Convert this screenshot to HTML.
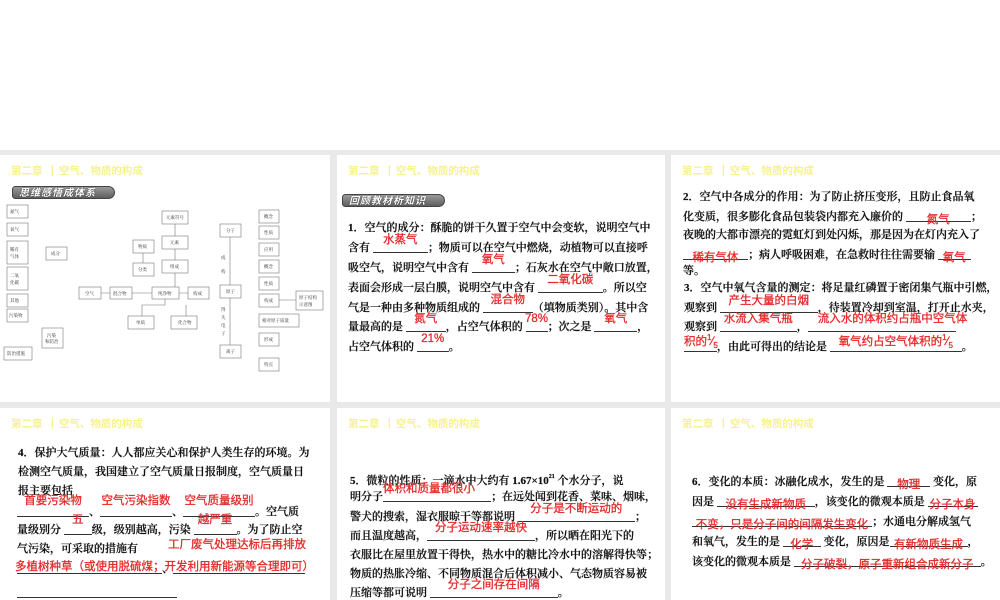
<!DOCTYPE html>
<html><head><meta charset="utf-8">
<style>
*{margin:0;padding:0;box-sizing:border-box}
body{width:1000px;height:600px;background:#fff;position:relative;overflow:hidden;font-family:"Liberation Serif","Noto Serif CJK SC",serif;color:#111}
#bg{position:absolute;left:0;top:150px;width:1000px;height:450px;background:#e9e9e9}
.s{position:absolute;background:#fff;overflow:hidden}
.h{position:absolute;left:11px;top:8px;font-size:10.5px;font-weight:bold;color:#f6f290;font-family:"Liberation Sans","Noto Sans CJK SC",sans-serif;white-space:nowrap}
.l{position:absolute;white-space:nowrap;font-size:11px;line-height:20px;height:20px;font-weight:600;-webkit-text-stroke:0.2px #111}
.b{display:inline-block;border-bottom:1px solid #333;height:13px;vertical-align:-2px;position:relative}
.b i{position:absolute;left:-20px;right:-20px;text-align:center;top:-7px;color:#e42a2a;font-style:normal;font-weight:normal;-webkit-text-stroke:0.3px #e42a2a;font-family:"Liberation Sans","Noto Sans CJK SC",sans-serif;white-space:nowrap;font-size:11.5px;line-height:14px}
.dn .b i{top:4px}
.red{position:absolute;color:#e42a2a;-webkit-text-stroke:0.3px #e42a2a;font-family:"Liberation Sans","Noto Sans CJK SC",sans-serif;white-space:nowrap;font-size:11.5px;line-height:14px}
.ban{position:absolute;height:13px;width:103px;border-radius:4px 8px 8px 4px;background:linear-gradient(#9a9a9a,#5e5e5e);color:#fff;font-size:10px;font-weight:bold;font-style:italic;line-height:13px;padding-left:6px;letter-spacing:1px;font-family:"Liberation Sans","Noto Sans CJK SC",sans-serif;border:1px solid #444;text-shadow:0 0 1px #000}
svg text{font-family:"Liberation Serif","Noto Serif CJK SC",serif;font-size:4.5px;fill:#333}
</style></head><body>
<div id="bg"></div>

<!-- slide 1 -->
<div class="s" style="left:0;top:155px;width:330px;height:247px">
<div class="h">第二章▕ &nbsp;空气、物质的构成</div>
<div class="ban" style="left:12px;top:31px">思维感悟成体系</div>
<svg width="330" height="247" style="position:absolute;left:0;top:0" stroke="#777" stroke-width="0.6" fill="none">
<g fill="#fff">
<rect x="7" y="50" width="21" height="13"/><rect x="7" y="68" width="21" height="13"/>
<rect x="7" y="86" width="21" height="23"/><rect x="7" y="112" width="21" height="23"/>
<rect x="7" y="139" width="21" height="13"/><rect x="7" y="154" width="21" height="13"/>
<rect x="46" y="92" width="21" height="13"/><rect x="42" y="173" width="21" height="20"/>
<rect x="4" y="192" width="28" height="13"/>
<rect x="79" y="132" width="22" height="12"/><rect x="110" y="132" width="22" height="12"/>
<rect x="152" y="132" width="27" height="12"/><rect x="188" y="132" width="21" height="12"/>
<rect x="133" y="85" width="21" height="13"/><rect x="133" y="108" width="21" height="13"/>
<rect x="162" y="56" width="26" height="13"/><rect x="162" y="81" width="26" height="13"/>
<rect x="162" y="105" width="26" height="13"/>
<rect x="128" y="161" width="26" height="13"/><rect x="171" y="161" width="26" height="13"/>
<rect x="220" y="69" width="21" height="13"/><rect x="220" y="130" width="21" height="13"/>
<rect x="220" y="190" width="21" height="13"/>
<rect x="259" y="55" width="20" height="13"/><rect x="259" y="71" width="20" height="13"/>
<rect x="259" y="88" width="20" height="13"/><rect x="259" y="105" width="20" height="13"/>
<rect x="259" y="122" width="20" height="13"/><rect x="259" y="139" width="20" height="13"/>
<rect x="259" y="159" width="40" height="13"/><rect x="259" y="178" width="20" height="13"/>
<rect x="259" y="203" width="20" height="13"/><rect x="296" y="136" width="27" height="19"/>
</g>
<path d="M110 138H101M152 138H132M179 138H188M143 98V108M175 118V132M175 94V105M175 69V81M165 144V150H142V161M186 150V161M230 82V130M230 143V190M279 145H296"/>
<g stroke="none" fill="#333">
<text x="10" y="58">氮气</text><text x="10" y="76">氧气</text><text x="10" y="96">稀有</text><text x="10" y="103">气体</text>
<text x="10" y="122">二氧</text><text x="10" y="129">化碳</text><text x="10" y="147">其他</text><text x="9" y="162">污染物</text>
<text x="51" y="100">成分</text><text x="47" y="182">污染</text><text x="45" y="188">和防治</text><text x="7" y="200">防治措施</text>
<text x="85" y="140">空气</text><text x="113" y="140">混合物</text><text x="158" y="140">纯净物</text><text x="193" y="140">构成</text>
<text x="138" y="93">物质</text><text x="138" y="116">分类</text><text x="166" y="64">元素符号</text><text x="170" y="89">元素</text>
<text x="170" y="113">组成</text><text x="136" y="169">单质</text><text x="178" y="169">化合物</text>
<text x="226" y="77">分子</text><text x="226" y="138">原子</text><text x="226" y="198">离子</text>
<text x="221" y="104">成</text><text x="221" y="118">构</text>
<text x="221" y="156">得</text><text x="221" y="164">失</text><text x="221" y="172">电</text><text x="221" y="180">子</text>
<text x="264" y="63">概念</text><text x="264" y="79">性质</text><text x="264" y="96">应用</text><text x="264" y="113">概念</text>
<text x="264" y="130">性质</text><text x="264" y="147">构成</text><text x="262" y="167">相对原子质量</text><text x="264" y="186">形成</text>
<text x="264" y="211">特点</text><text x="299" y="144">原子结构</text><text x="299" y="151">示意图</text>
</g></svg>
</div>

<!-- slide 2 -->
<div class="s" style="left:337px;top:155px;width:328px;height:247px">
<div class="h">第二章▕ &nbsp;空气、物质的构成</div>
<div class="ban" style="left:5px;top:39px">回顾教材析知识</div>
<div class="l" style="left:11px;top:63px">1．空气的成分：酥脆的饼干久置于空气中会变软，说明空气中</div>
<div class="l" style="left:11px;top:83px">含有 <span class="b" style="width:55px"><i>水蒸气</i></span>；物质可以在空气中燃烧，动植物可以直接呼</div>
<div class="l" style="left:11px;top:103px">吸空气，说明空气中含有 <span class="b" style="width:43px"><i>氧气</i></span>；石灰水在空气中敞口放置，</div>
<div class="l" style="left:11px;top:123px">表面会形成一层白膜，说明空气中含有 <span class="b" style="width:65px"><i>二氧化碳</i></span>。所以空</div>
<div class="l" style="left:11px;top:143px">气是一种由多种物质组成的 <span class="b" style="width:50px"><i>混合物</i></span>（填物质类别）。其中含</div>
<div class="l" style="left:11px;top:162px">量最高的是 <span class="b" style="width:40px"><i>氮气</i></span>，占空气体积的 <span class="b" style="width:22px"><i>78%</i></span>；次之是 <span class="b" style="width:43px"><i>氧气</i></span>，</div>
<div class="l" style="left:11px;top:182px">占空气体积的 <span class="b" style="width:32px"><i>21%</i></span>。</div>
</div>

<!-- slide 3 -->
<div class="s" style="left:671px;top:155px;width:329px;height:247px">
<div class="h">第二章▕ &nbsp;空气、物质的构成</div>
<div class="l" style="left:12px;top:32px">2．空气中各成分的作用：为了防止挤压变形，且防止食品氧</div>
<div class="l dn" style="left:12px;top:52px">化变质，很多膨化食品包装袋内都充入廉价的 <span class="b" style="width:65px"><i>氮气</i></span>；</div>
<div class="l" style="left:12px;top:70px">夜晚的大都市漂亮的霓虹灯到处闪烁，那是因为在灯内充入了</div>
<div class="l dn" style="left:12px;top:90px"><span class="b" style="width:65px"><i>稀有气体</i></span>；病人呼吸困难，在急救时往往需要输 <span class="b" style="width:33px"><i>氧气</i></span></div>
<div class="l" style="left:12px;top:106px">等。</div>
<div class="l" style="left:13px;top:123px">3．空气中氧气含量的测定：将足量红磷置于密闭集气瓶中引燃，</div>
<div class="l" style="left:13px;top:143px">观察到 <span class="b" style="width:98px"><i style="top:-6px">产生大量的白烟</i></span>，待装置冷却到室温，打开止水夹，</div>
<div class="l" style="left:13px;top:162px">观察到 <span class="b" style="width:77px"><i>水流入集气瓶</i></span>，<span class="b" style="width:148px"><i style="left:10px;text-align:left">流入水的体积约占瓶中空气体</i></span></div>
<div class="l" style="left:13px;top:182px"><span class="b" style="width:33px"><i style="left:0;text-align:left;top:-8px">积的<sup style="font-size:8px">1</sup>⁄<sub style="font-size:8px">5</sub></i></span>，由此可得出的结论是 <span class="b" style="width:132px"><i style="top:-8px">氧气约占空气体积的<sup style="font-size:8px">1</sup>⁄<sub style="font-size:8px">5</sub></i></span>。</div>
</div>

<!-- slide 4 -->
<div class="s" style="left:0;top:408px;width:330px;height:192px">
<div class="h">第二章▕ &nbsp;空气、物质的构成</div>
<div class="l" style="left:18px;top:35px">4．保护大气质量：人人都应关心和保护人类生存的环境。为</div>
<div class="l" style="left:18px;top:54px">检测空气质量，我国建立了空气质量日报制度，空气质量日</div>
<div class="l" style="left:18px;top:73px">报主要包括</div>
<div class="l" style="left:17px;top:94px"><span class="b" style="width:72px"><i style="top:-10px">首要污染物</i></span>、<span class="b" style="width:72px"><i style="top:-10px">空气污染指数</i></span>、<span class="b" style="width:72px"><i style="top:-10px">空气质量级别</i></span>。空气质</div>
<div class="l" style="left:17px;top:112px">量级别分 <span class="b" style="width:28px"><i style="top:-9px">五</i></span>级，级别越高，污染 <span class="b" style="width:43px"><i style="top:-9px">越严重</i></span>。为了防止空</div>
<div class="l" style="left:17px;top:131px">气污染，可采取的措施有</div>
<div class="red" style="left:168px;top:130px">工厂废气处理达标后再排放</div>
<div class="l" style="left:17px;top:151px"><span class="b" style="width:145px"></span>、<span class="b" style="width:132px"></span></div>
<div class="red" style="left:15px;top:152px">多植树种草（或使用脱硫煤；开发利用新能源等合理即可）</div>
<div class="l" style="left:17px;top:175px"><span class="b" style="width:160px"></span></div>
</div>

<!-- slide 5 -->
<div class="s" style="left:337px;top:408px;width:328px;height:192px">
<div class="h">第二章▕ &nbsp;空气、物质的构成</div>
<div class="l" style="left:13px;top:59px">5．微粒的性质：一滴水中大约有 1.67×10<sup style="font-size:6px;vertical-align:6px">21</sup> 个水分子，说</div>
<div class="l" style="left:13px;top:79px">明分子<span class="b" style="width:108px"><i style="left:0;text-align:left">体积和质量都很小</i></span>；在远处闻到花香、菜味、烟味，</div>
<div class="l" style="left:13px;top:99px">警犬的搜索，湿衣服晾干等都说明 <span class="b" style="width:117px"><i>分子是不断运动的</i></span>；</div>
<div class="l" style="left:13px;top:118px">而且温度越高，<span class="b" style="width:108px"><i>分子运动速率越快</i></span>，所以晒在阳光下的</div>
<div class="l" style="left:13px;top:137px">衣服比在屋里放置干得快，热水中的糖比冷水中的溶解得快等；</div>
<div class="l" style="left:13px;top:156px">物质的热胀冷缩、不同物质混合后体积减小、气态物质容易被</div>
<div class="l" style="left:13px;top:175px">压缩等都可说明 <span class="b" style="width:128px"><i>分子之间存在间隔</i></span>。</div>
</div>

<!-- slide 6 -->
<div class="s" style="left:671px;top:408px;width:329px;height:192px">
<div class="h">第二章▕ &nbsp;空气、物质的构成</div>
<div class="l dn" style="left:21px;top:64px">6．变化的本质：冰融化成水，发生的是 <span class="b" style="width:43px"><i>物理</i></span> 变化，原</div>
<div class="l dn" style="left:21px;top:84px">因是 <span class="b" style="width:98px"><i>没有生成新物质</i></span>，该变化的微观本质是 <span class="b" style="width:50px"><i>分子本身</i></span></div>
<div class="l dn" style="left:21px;top:104px"><span class="b" style="width:180px"><i>不变，只是分子间的间隔发生变化</i></span>；水通电分解成氢气</div>
<div class="l dn" style="left:21px;top:124px">和氧气，发生的是 <span class="b" style="width:38px"><i>化学</i></span> 变化，原因是<span class="b" style="width:78px"><i>有新物质生成</i></span>，</div>
<div class="l dn" style="left:21px;top:144px">该变化的微观本质是 <span class="b" style="width:187px"><i>分子破裂，原子重新组合成新分子</i></span>。</div>
</div>
</body></html>
